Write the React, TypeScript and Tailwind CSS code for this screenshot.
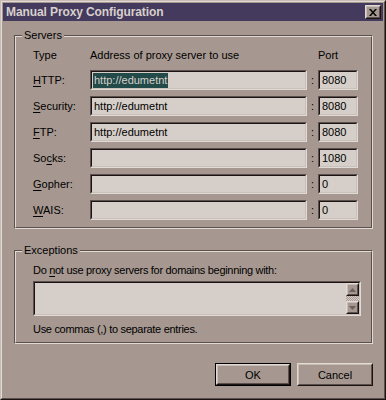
import React from 'react';

const FONT = { fontFamily: '"Liberation Sans", Arial, sans-serif' };

// Sunken 3D field, Win9x style
const Sunken: React.FC<{ className?: string; children?: React.ReactNode }> = ({ className = '', children }) => (
  <div className={`border border-t-[#5c504c] border-l-[#5c504c] border-b-[#e2dad4] border-r-[#e2dad4] ${className}`}>
    <div className="h-full border border-t-[#1c1414] border-l-[#1c1414] border-b-[#c8c0ba] border-r-[#c8c0ba] bg-[#d6cec8] flex items-center">
      {children}
    </div>
  </div>
);

const Raised: React.FC<{ className?: string; children?: React.ReactNode }> = ({ className = '', children }) => (
  <div className={`border border-t-[#e2dad4] border-l-[#e2dad4] border-b-[#1c1414] border-r-[#1c1414] ${className}`}>
    <div className="h-full border border-t-[#c8bcb4] border-l-[#c8bcb4] border-b-[#5c504c] border-r-[#5c504c] flex items-center justify-center">
      {children}
    </div>
  </div>
);

const GroupBox: React.FC<{ title: string; className?: string; children: React.ReactNode }> = ({ title, className = '', children }) => (
  <div className={`relative border border-t-[#5c504c] border-l-[#5c504c] border-b-[#e2dad4] border-r-[#e2dad4] ${className}`}>
    <div className="h-full border border-t-[#e2dad4] border-l-[#e2dad4] border-b-[#5c504c] border-r-[#5c504c]">
      {children}
    </div>
    <span className="absolute -top-[8px] left-[7px] bg-[#a69890] px-[2px] leading-[14px]">{title}</span>
  </div>
);

const Key: React.FC<{ children: React.ReactNode }> = ({ children }) => <span className="underline underline-offset-2">{children}</span>;

const rows: { label: React.ReactNode; value: string; port: string; selected?: boolean }[] = [
  { label: <><Key>H</Key>TTP:</>, value: 'http://edumetnt', port: '8080', selected: true },
  { label: <><Key>S</Key>ecurity:</>, value: 'http://edumetnt', port: '8080' },
  { label: <><Key>F</Key>TP:</>, value: 'http://edumetnt', port: '8080' },
  { label: <>So<Key>c</Key>ks:</>, value: '', port: '1080' },
  { label: <><Key>G</Key>opher:</>, value: '', port: '0' },
  { label: <><Key>W</Key>AIS:</>, value: '', port: '0' },
];

export default function App() {
  return (
    <div style={FONT} className="w-[386px] h-[400px] text-[11px] text-black bg-[#a69890]">
      <div className="w-full h-full border border-t-[#c8bcb4] border-l-[#c8bcb4] border-b-[#1c1414] border-r-[#1c1414]">
        <div className="w-full h-full border border-t-[#e2dad4] border-l-[#e2dad4] border-b-[#5c504c] border-r-[#5c504c] p-px flex flex-col">
          {/* title bar */}
          <div className="h-[18px] shrink-0 bg-[#433a5e] flex items-center justify-between pl-[3px] pr-[2px]">
            <span className="font-bold text-[#d8d0ca] text-[12px] leading-[14px] tracking-[-0.1px]">Manual Proxy Configuration</span>
            <Raised className="w-[16px] h-[14px] bg-[#a69890]">
              <svg width="8" height="7" viewBox="0 0 8 7">
                <path d="M0 0h2l2 2.5L6 0h2L5 3.5 8 7H6L4 4.5 2 7H0l3-3.5z" fill="#000" />
              </svg>
            </Raised>
          </div>

          {/* Servers */}
          <GroupBox title="Servers" className="mt-[14px] ml-[11px] w-[359px] h-[194px]">
            <div className="pl-[17px] pt-[11px]">
              <div className="grid grid-cols-[57px_217px_11px_40px] leading-[14px] mb-[8px]">
                <span>Type</span>
                <span>Address of proxy server to use</span>
                <span />
                <span>Port</span>
              </div>
              <div className="flex flex-col gap-[6px]">
                {rows.map((r, i) => (
                  <div key={i} className="grid grid-cols-[57px_217px_11px_40px] h-[20px] items-center">
                    <span className="leading-[14px]">{r.label}</span>
                    <Sunken className="h-[20px]">
                      {r.value && (
                        <span className={`ml-px px-[1px] leading-[15px] ${r.selected ? 'bg-[#214a48] text-[#d6cec8]' : ''}`}>{r.value}</span>
                      )}
                    </Sunken>
                    <span className="text-center leading-[14px]">:</span>
                    <Sunken className="h-[20px]">
                      <span className="pl-[2px] leading-[14px]">{r.port}</span>
                    </Sunken>
                  </div>
                ))}
              </div>
            </div>
          </GroupBox>

          {/* Exceptions */}
          <GroupBox title="Exceptions" className="mt-[21px] ml-[11px] w-[359px] h-[94px]">
            <div className="pl-[17px] pt-[11px]">
              <div className="leading-[14px] tracking-[-0.3px]">Do <Key>n</Key>ot use proxy servers for domains beginning with:</div>
              <Sunken className="mt-[4px] w-[328px] h-[35px]">
                <div className="flex-1" />
                <div className="w-[13px] h-full flex flex-col">
                  <Raised className="w-[13px] h-[13px] bg-[#a69890]">
                    <svg width="7" height="4" viewBox="0 0 7 4"><path d="M3.5 0L7 4H0z" fill="#6c605c" /></svg>
                  </Raised>
                  <div className="flex-1 bg-[repeating-conic-gradient(#d6cec8_0%_25%,#a69890_0%_50%)] bg-[length:2px_2px]" />
                  <Raised className="w-[13px] h-[13px] bg-[#a69890]">
                    <svg width="7" height="4" viewBox="0 0 7 4"><path d="M0 0h7L3.5 4z" fill="#6c605c" /></svg>
                  </Raised>
                </div>
              </Sunken>
              <div className="mt-[6px] leading-[14px] tracking-[-0.3px]">Use commas (,) to separate entries.</div>
            </div>
          </GroupBox>

          {/* buttons */}
          <div className="mt-[19px] flex justify-end gap-[6px] pr-[10px]">
            <div className="border border-black">
              <Raised className="w-[74px] h-[21px]">
                <span className="leading-[14px]">OK</span>
              </Raised>
            </div>
            <Raised className="w-[76px] h-[23px]">
              <span className="leading-[14px]">Cancel</span>
            </Raised>
          </div>
        </div>
      </div>
    </div>
  );
}
